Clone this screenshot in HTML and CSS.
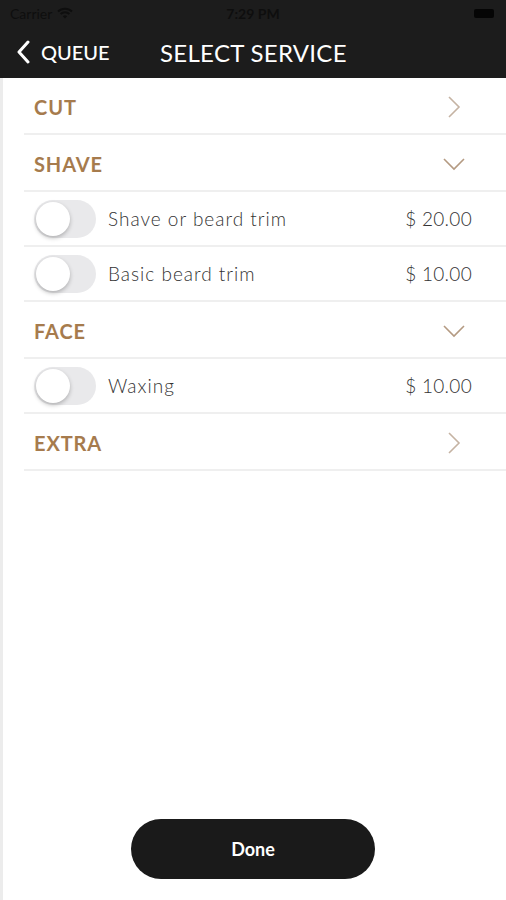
FILE: index.html
```html
<!DOCTYPE html>
<html lang="en">
<head>
    <meta charset="UTF-8">
    <meta name="viewport" content="width=device-width, initial-scale=1.0">
    <title>Select Service</title>
    <link rel="stylesheet" href="styles.css">
</head>
<body>
    <!-- Header -->
    <header class="top-bar">
        <div class="status-bar">
            <span class="carrier">Carrier
                <svg class="wifi" width="16" height="12" viewBox="0 0 16 12">
                    <path d="M1 4.5a10 10 0 0 1 14 0" fill="none" stroke="#0e0e0e" stroke-width="2"/>
                    <path d="M3.6 7a6.3 6.3 0 0 1 8.8 0" fill="none" stroke="#0e0e0e" stroke-width="2"/>
                    <path d="M8 11.5l-2.2-2.3a3.2 3.2 0 0 1 4.4 0z" fill="#0e0e0e"/>
                </svg>
            </span>
            <span class="clock">7:29 PM</span>
            <span class="battery"></span>
        </div>
        <nav class="nav-bar">
            <a href="#" class="back-link">
                <svg width="14" height="24" viewBox="0 0 14 24">
                    <path d="M12 2L3 12l9 10" fill="none" stroke="#fff" stroke-width="3" stroke-linecap="round" stroke-linejoin="round"/>
                </svg>
                <span>QUEUE</span>
            </a>
            <h1 class="nav-title">SELECT SERVICE</h1>
        </nav>
    </header>

    <!-- Service list -->
    <main class="content">
        <ul class="service-list">
            <li class="section-row">
                <span class="section-name">CUT</span>
                <svg class="chev" width="16" height="24" viewBox="0 0 16 24"><path d="M3 2l10 10-10 10" fill="none" stroke="#c5b3a3" stroke-width="1.6"/></svg>
            </li>
            <li class="section-row">
                <span class="section-name">SHAVE</span>
                <svg class="chev down" width="24" height="16" viewBox="0 0 24 16"><path d="M2 3l10 10 10-10" fill="none" stroke="#b49a82" stroke-width="1.6"/></svg>
            </li>
            <li class="item-row">
                <span class="toggle"><span class="knob"></span></span>
                <span class="item-name">Shave or beard trim</span>
                <span class="item-price">$ 20.00</span>
            </li>
            <li class="item-row">
                <span class="toggle"><span class="knob"></span></span>
                <span class="item-name">Basic beard trim</span>
                <span class="item-price">$ 10.00</span>
            </li>
            <li class="section-row">
                <span class="section-name">FACE</span>
                <svg class="chev down" width="24" height="16" viewBox="0 0 24 16"><path d="M2 3l10 10 10-10" fill="none" stroke="#b49a82" stroke-width="1.6"/></svg>
            </li>
            <li class="item-row">
                <span class="toggle"><span class="knob"></span></span>
                <span class="item-name">Waxing</span>
                <span class="item-price">$ 10.00</span>
            </li>
            <li class="section-row">
                <span class="section-name">EXTRA</span>
                <svg class="chev" width="16" height="24" viewBox="0 0 16 24"><path d="M3 2l10 10-10 10" fill="none" stroke="#c5b3a3" stroke-width="1.6"/></svg>
            </li>
        </ul>

        <div class="footer">
            <button class="done-btn">Done</button>
        </div>
    </main>
</body>
</html>
```

FILE: styles.css
```css
* {
    margin: 0;
    padding: 0;
    box-sizing: border-box;
    font-family: 'Lato', 'Noto Sans', sans-serif;
}

:root {
    --bar-bg: #1c1c1c;
    --accent: #a67b4d;
    --text: #333;
    --line: #efefef;
}

html, body {
    height: 100%;
}

body {
    background-color: #fff;
    display: flex;
    flex-direction: column;
}

/* Header */
.top-bar {
    background-color: var(--bar-bg);
    height: 78px;
    flex-shrink: 0;
}

.status-bar {
    display: flex;
    justify-content: space-between;
    align-items: center;
    height: 26px;
    padding: 0 12px 0 10px;
    position: relative;
    color: #0e0e0e;
    font-size: 14px;
}

.carrier {
    display: flex;
    align-items: center;
    gap: 5px;
}

.clock {
    position: absolute;
    left: 0;
    right: 0;
    text-align: center;
    font-weight: 700;
    pointer-events: none;
}

.battery {
    width: 20px;
    height: 9px;
    background-color: #050505;
    border-radius: 2px;
}

.nav-bar {
    display: flex;
    align-items: center;
    height: 52px;
    padding-left: 16px;
}

.back-link {
    display: flex;
    align-items: center;
    gap: 11px;
    color: #fff;
    text-decoration: none;
    font-size: 20px;
    font-weight: 500;
    width: 144px;
}

.nav-title {
    color: #fff;
    font-size: 24px;
    font-weight: 400;
    letter-spacing: 0.3px;
}

/* Content */
.content {
    flex: 1;
    display: flex;
    flex-direction: column;
    border-left: 3px solid #ececec;
}

.service-list {
    list-style: none;
    padding-left: 21px;
}

.section-row, .item-row {
    display: flex;
    align-items: center;
    border-bottom: 2px solid var(--line);
}

.section-row {
    height: 57px;
    padding: 2px 44px 0 10px;
    justify-content: space-between;
}

.section-name {
    color: var(--accent);
    font-size: 20px;
    font-weight: 700;
    letter-spacing: 0.9px;
}

.chev.down {
    margin-right: -4px;
}

.item-row {
    height: 55px;
    padding: 0 34px 0 10px;
}

.toggle {
    width: 62px;
    height: 38px;
    border-radius: 19px;
    background-color: #e9e9eb;
    position: relative;
    flex-shrink: 0;
}

.knob {
    position: absolute;
    top: 2px;
    left: 2px;
    width: 34px;
    height: 34px;
    border-radius: 50%;
    background-color: #fff;
    box-shadow: 0 2px 4px rgba(0,0,0,0.25);
}

.item-name {
    flex: 1;
    margin-left: 12px;
    font-size: 19px;
    font-weight: 300;
    letter-spacing: 1px;
    color: var(--text);
}

.item-price {
    font-size: 19px;
    font-weight: 300;
    letter-spacing: 0.3px;
    color: var(--text);
}

/* Footer */
.footer {
    margin-top: auto;
    display: flex;
    justify-content: center;
    padding-bottom: 21px;
    margin-left: -3px;
}

.done-btn {
    width: 244px;
    height: 60px;
    border: none;
    border-radius: 30px;
    background-color: #1a1a1a;
    color: #fff;
    font-size: 18px;
    font-weight: 700;
}
```
